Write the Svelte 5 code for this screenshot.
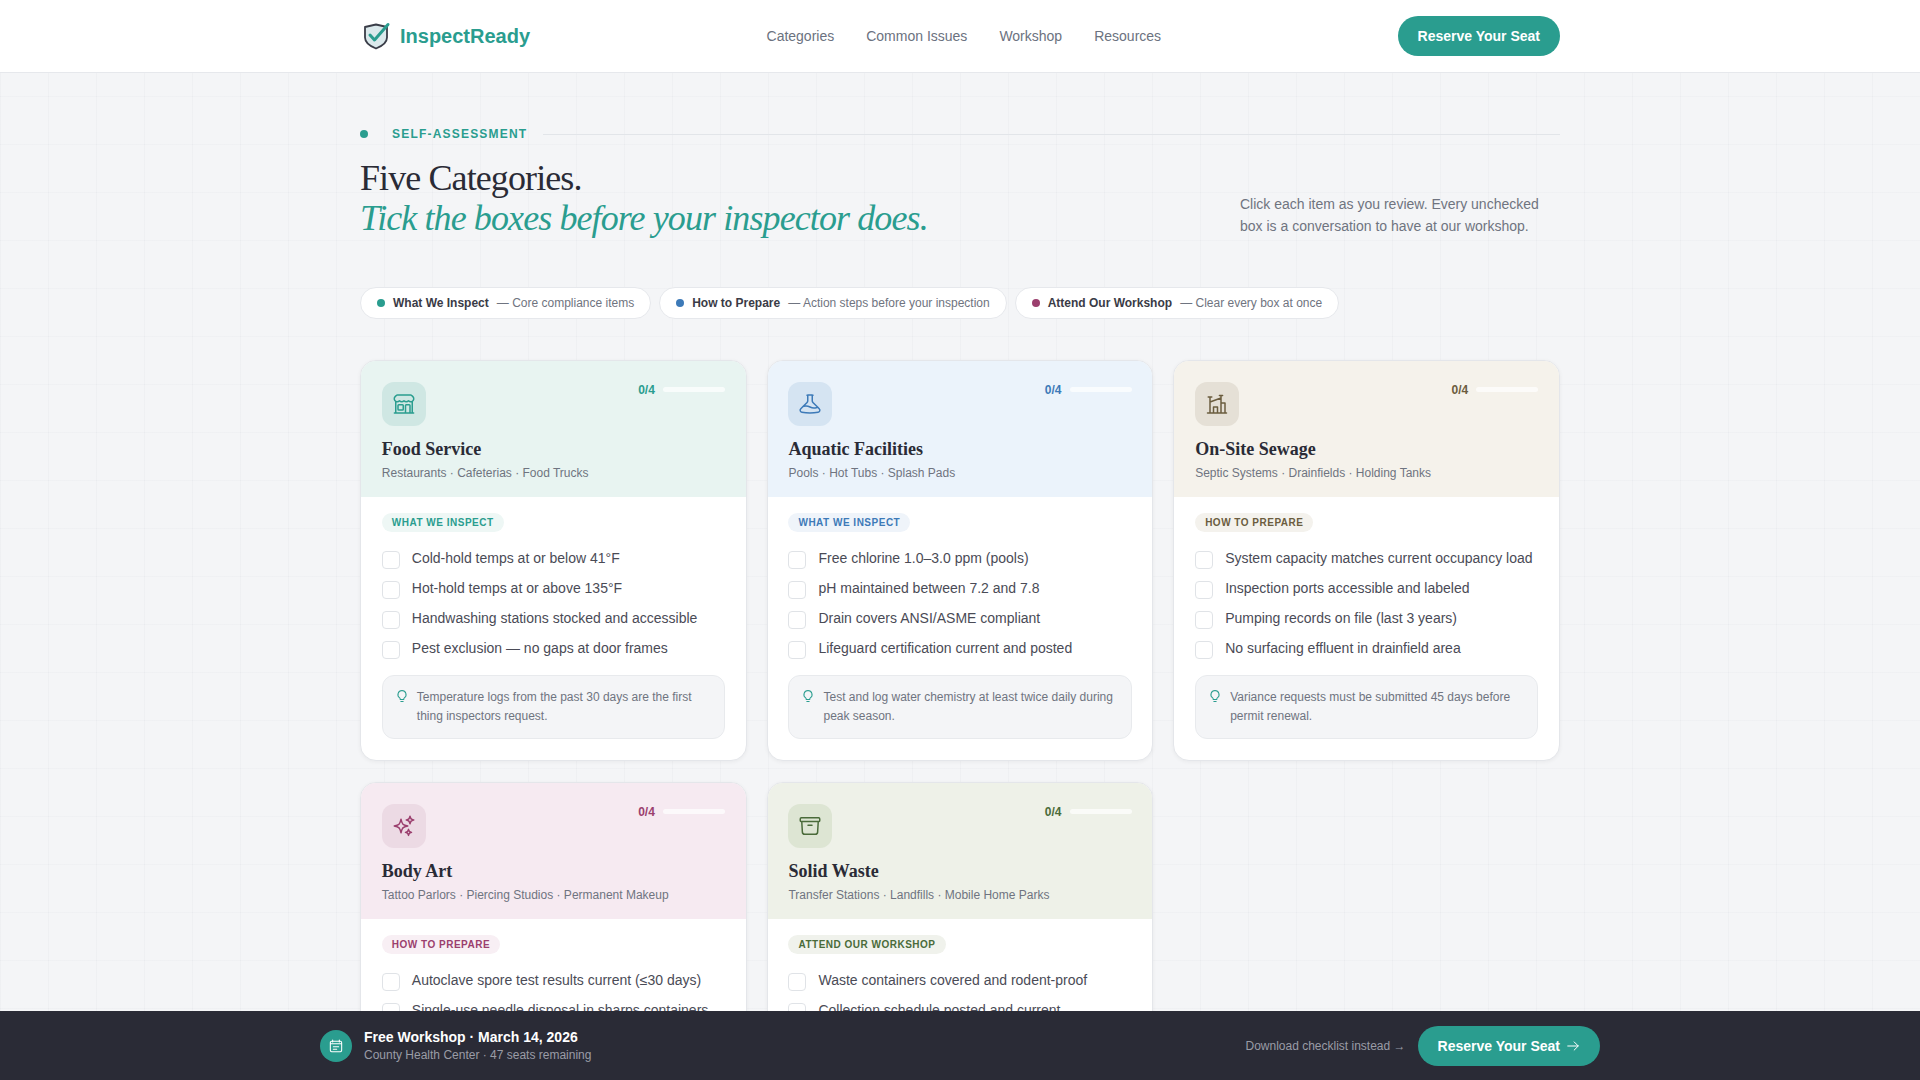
<script>
  const chips = [
    { color: '#2a9d8f', name: 'What We Inspect', note: '— Core compliance items' },
    { color: '#3d7ab8', name: 'How to Prepare', note: '— Action steps before your inspection' },
    { color: '#9b3f6e', name: 'Attend Our Workshop', note: '— Clear every box at once' }
  ]

  const cards = [
    {
      key: 'food', icon: 'store', title: 'Food Service', sub: 'Restaurants · Cafeterias · Food Trucks', tag: 'What We Inspect',
      items: ['Cold-hold temps at or below 41°F', 'Hot-hold temps at or above 135°F', 'Handwashing stations stocked and accessible', 'Pest exclusion — no gaps at door frames'],
      tip: 'Temperature logs from the past 30 days are the first thing inspectors request.'
    },
    {
      key: 'aquatic', icon: 'beaker', title: 'Aquatic Facilities', sub: 'Pools · Hot Tubs · Splash Pads', tag: 'What We Inspect',
      items: ['Free chlorine 1.0–3.0 ppm (pools)', 'pH maintained between 7.2 and 7.8', 'Drain covers ANSI/ASME compliant', 'Lifeguard certification current and posted'],
      tip: 'Test and log water chemistry at least twice daily during peak season.'
    },
    {
      key: 'sewage', icon: 'plant', title: 'On-Site Sewage', sub: 'Septic Systems · Drainfields · Holding Tanks', tag: 'How to Prepare',
      items: ['System capacity matches current occupancy load', 'Inspection ports accessible and labeled', 'Pumping records on file (last 3 years)', 'No surfacing effluent in drainfield area'],
      tip: 'Variance requests must be submitted 45 days before permit renewal.'
    },
    {
      key: 'body', icon: 'sparkles', title: 'Body Art', sub: 'Tattoo Parlors · Piercing Studios · Permanent Makeup', tag: 'How to Prepare',
      items: ['Autoclave spore test results current (≤30 days)', 'Single-use needle disposal in sharps containers', 'Client consent forms retained on file', 'Artist licenses displayed at each station'],
      tip: 'Keep spore test logs in a binder next to the autoclave.'
    },
    {
      key: 'waste', icon: 'archive', title: 'Solid Waste', sub: 'Transfer Stations · Landfills · Mobile Home Parks', tag: 'Attend Our Workshop',
      items: ['Waste containers covered and rodent-proof', 'Collection schedule posted and current', 'Leachate controls inspected and logged', 'Site access restricted after hours'],
      tip: 'Bring your last two inspection reports to the workshop.'
    }
  ]

  const icons = {
    store: 'M13.5 21v-7.5a.75.75 0 0 1 .75-.75h3a.75.75 0 0 1 .75.75V21m-4.5 0H2.36m11.14 0H18m0 0h3.64m-1.39 0V9.35m-16.5 11.65V9.35m0 0a3 3 0 0 0 3.75-.62 3 3 0 0 0 2.25 1.02c.9 0 1.7-.4 2.25-1.02a3 3 0 0 0 2.25 1.02c.9 0 1.7-.4 2.25-1.02a3 3 0 0 0 3.75.62m-16.5 0a3 3 0 0 1-.62-4.72l1.19-1.19A1.5 1.5 0 0 1 5.38 3h13.24c.4 0 .78.16 1.06.44l1.19 1.19a3 3 0 0 1-.62 4.72M6.75 18h3.75a.75.75 0 0 0 .75-.75V13.5a.75.75 0 0 0-.75-.75H6.75a.75.75 0 0 0-.75.75v3.75c0 .41.34.75.75.75Z',
    beaker: 'M9.75 3.1v5.71c0 .6-.24 1.17-.66 1.6L5 14.5m4.75-11.4a24 24 0 0 1 4.5 0m-4.5 0c-.25.03-.5.05-.75.08m5.25-.08v5.71c0 .6.24 1.17.66 1.6L19.8 15.3M14.25 3.1c.25.03.5.05.75.08M19.8 15.3l-1.57.39A9.07 9.07 0 0 1 12 15a9.07 9.07 0 0 0-6.23-.69L5 14.5m14.8.8 1.4 1.4c1.23 1.23.65 3.32-1.07 3.6A48.3 48.3 0 0 1 12 21c-2.77 0-5.49-.24-8.13-.7-1.72-.28-2.3-2.37-1.07-3.6L5 14.5',
    plant: 'M2.5 21h19M5 21V5M3.2 5h3.6M5 10l11-4M16 3.500V21M14.400 3.500h3.200M16 11h4v10M8.500 21v-6h4v6',
    sparkles: 'M9.81 15.9 9 18.75l-.81-2.85a4.5 4.5 0 0 0-3.09-3.09L2.25 12l2.85-.81a4.5 4.5 0 0 0 3.09-3.09L9 5.25l.81 2.85a4.5 4.5 0 0 0 3.09 3.09l2.85.81-2.85.81a4.5 4.5 0 0 0-3.09 3.09ZM18.26 8.72 18 9.75l-.26-1.03a3.38 3.38 0 0 0-2.46-2.46L14.25 6l1.03-.26a3.38 3.38 0 0 0 2.46-2.46L18 2.25l.26 1.03a3.38 3.38 0 0 0 2.46 2.46l1.03.26-1.03.26a3.38 3.38 0 0 0-2.46 2.46ZM16.89 20.18 16.5 21.38l-.39-1.2a2.25 2.25 0 0 0-1.42-1.42l-1.2-.39 1.2-.39a2.25 2.25 0 0 0 1.42-1.42l.39-1.2.39 1.2a2.25 2.25 0 0 0 1.42 1.42l1.2.39-1.2.39a2.25 2.25 0 0 0-1.42 1.42Z',
    archive: 'M20.25 7.5l-.63 10.63A2.25 2.25 0 0 1 17.38 20.25H6.62a2.25 2.25 0 0 1-2.24-2.12L3.75 7.5M10 11.25h4M3.38 7.5h17.25c.62 0 1.12-.5 1.12-1.12v-1.5c0-.63-.5-1.13-1.12-1.13H3.38c-.63 0-1.13.5-1.13 1.13v1.5c0 .62.5 1.12 1.13 1.12Z'
  }
</script>

<nav class="topbar">
  <div class="topbar-inner">
    <a class="logo" href="#top">
      <svg class="logo-mark" viewBox="0 0 32 32" width="32" height="32" fill="none">
        <path d="M5 7l11-2.500L27 7v10.500c0 5.200-4.600 8.500-11 11-6.400-2.500-11-5.800-11-11Z" fill="#dbe9ec" stroke="#3a3d48" stroke-width="1.800" stroke-linejoin="round"/>
        <path d="M10 15l4.500 5L28 4.500" stroke="#2a9d8f" stroke-width="3" stroke-linecap="round" stroke-linejoin="round"/>
      </svg>
      <span>InspectReady</span>
    </a>
    <div class="links">
      <a href="#categories">Categories</a>
      <a href="#issues">Common Issues</a>
      <a href="#workshop">Workshop</a>
      <a href="#resources">Resources</a>
    </div>
    <a class="btn" href="#reserve">Reserve Your Seat</a>
  </div>
</nav>

<main class="page">
  <div class="eyebrow"><i></i><span>SELF-ASSESSMENT</span><b></b></div>

  <header class="head">
    <h1>Five Categories.<br /><em>Tick the boxes before your inspector does.</em></h1>
    <p>Click each item as you review. Every unchecked box is a conversation to have at our workshop.</p>
  </header>

  <div class="chips">
    {#each chips as chip}
      <div class="chip">
        <i style="background:{chip.color}"></i>
        <strong>{chip.name}</strong>
        <span>{chip.note}</span>
      </div>
    {/each}
  </div>

  <section class="grid">
    {#each cards as card}
      <article class="card {card.key}">
        <div class="card-head">
          <div class="card-top">
            <div class="card-icon">
              <svg viewBox="0 0 24 24" width="24" height="24" fill="none" stroke="currentColor" stroke-width="1.5" stroke-linecap="round" stroke-linejoin="round">
                <path d={icons[card.icon]} />
              </svg>
            </div>
            <div class="progress">
              <span>0/4</span>
              <div class="track"></div>
            </div>
          </div>
          <h3>{card.title}</h3>
          <p>{card.sub}</p>
        </div>
        <div class="card-body">
          <span class="tag">{card.tag}</span>
          <ul>
            {#each card.items as item}
              <li><span class="box"></span><span>{item}</span></li>
            {/each}
          </ul>
          <div class="tip">
            <svg viewBox="0 0 24 24" width="14" height="14" fill="none" stroke="#2a9d8f" stroke-width="1.8" stroke-linecap="round" stroke-linejoin="round">
              <path d="M9 18h6M10 21.500h4M12 2.500a7 7 0 0 0-4 12.700c.7.500 1 1.200 1 2.800h6c0-1.600.3-2.300 1-2.800a7 7 0 0 0-4-12.700Z" />
            </svg>
            <span>{card.tip}</span>
          </div>
        </div>
      </article>
    {/each}
  </section>
</main>

<footer class="bar">
  <div class="bar-inner">
    <div class="bar-left">
      <div class="bar-icon">
        <svg viewBox="0 0 24 24" width="16" height="16" fill="none" stroke="#fff" stroke-width="1.6" stroke-linecap="round" stroke-linejoin="round">
          <path d="M7 3v3M17 3v3M3.500 8.500h17M5.500 5h13a2 2 0 0 1 2 2v11.500a2 2 0 0 1-2 2h-13a2 2 0 0 1-2-2V7a2 2 0 0 1 2-2ZM8 13h8M8 17h5" />
        </svg>
      </div>
      <div>
        <div class="bar-title">Free Workshop · March 14, 2026</div>
        <div class="bar-sub">County Health Center · 47 seats remaining</div>
      </div>
    </div>
    <div class="bar-right">
      <a class="download" href="#download">Download checklist instead →</a>
      <a class="btn" href="#reserve">
        Reserve Your Seat
        <svg viewBox="0 0 24 24" width="14" height="14" fill="none" stroke="currentColor" stroke-width="1.700" stroke-linecap="round" stroke-linejoin="round"><path d="M3 12h18M14 5l7 7-7 7" /></svg>
      </a>
    </div>
  </div>
</footer>

<style>
  :global(body) {
    margin: 0;
    background-color: #f4f5f7;
    background-image:
      linear-gradient(rgba(40, 50, 70, 0.018) 1px, transparent 1px),
      linear-gradient(90deg, rgba(40, 50, 70, 0.022) 1px, transparent 1px);
    background-size: 48px 48px;
    font-family: "Liberation Sans", Arial, sans-serif;
    color: #2a2b36;
  }

  a {
    text-decoration: none;
    color: inherit;
  }

  .topbar {
    height: 73px;
    box-sizing: border-box;
    background: #fff;
    border-bottom: 1px solid #e6e8ec;
  }

  .topbar-inner {
    width: 1200px;
    height: 100%;
    margin: 0 auto;
    display: flex;
    align-items: center;
    justify-content: space-between;
  }

  .logo {
    display: flex;
    align-items: center;
    gap: 8px;
    color: #2a9d8f;
    font-size: 20px;
    font-weight: 700;
  }

  .links {
    display: flex;
    gap: 32px;
    font-size: 14px;
    color: #6b7280;
  }

  .btn {
    display: inline-flex;
    align-items: center;
    gap: 6px;
    height: 40px;
    padding: 0 20px;
    box-sizing: border-box;
    background: #2a9d8f;
    color: #fff;
    border-radius: 20px;
    font-size: 14px;
    font-weight: 700;
  }

  .page {
    width: 1200px;
    margin: 0 auto;
    padding: 53px 0 120px;
  }

  .eyebrow {
    display: flex;
    align-items: center;
    height: 16px;
    font-size: 12px;
    font-weight: 700;
    letter-spacing: 0.1em;
    color: #2a9d8f;
  }

  .eyebrow i {
    width: 8px;
    height: 8px;
    border-radius: 50%;
    background: #2a9d8f;
    margin-right: 24px;
  }

  .eyebrow b {
    flex: 1;
    height: 1px;
    margin-left: 16px;
    background: #e2e5e9;
  }

  .head {
    display: flex;
    justify-content: space-between;
    align-items: flex-end;
    margin-top: 16px;
  }

  h1 {
    margin: 0;
    font-family: "Liberation Serif", "Times New Roman", serif;
    font-size: 36px;
    font-weight: 400;
    line-height: 40px;
    letter-spacing: -0.025em;
    color: #2a2b36;
  }

  h1 em {
    color: #2a9d8f;
  }

  .head p {
    width: 320px;
    margin: 0 0 1px;
    font-size: 14px;
    line-height: 22px;
    color: #6f7480;
  }

  .chips {
    display: flex;
    gap: 8px;
    margin-top: 49px;
  }

  .chip {
    display: flex;
    align-items: center;
    height: 32px;
    box-sizing: border-box;
    padding: 0 16px;
    background: #fff;
    border: 1px solid #e6e8ec;
    border-radius: 16px;
    font-size: 12px;
    color: #6f7480;
  }

  .chip i {
    width: 8px;
    height: 8px;
    border-radius: 50%;
    margin-right: 8px;
  }

  .chip strong {
    color: #3a3b46;
    margin-right: 8px;
  }

  .grid {
    display: grid;
    grid-template-columns: repeat(3, 1fr);
    gap: 21px 20px;
    margin-top: 41px;
  }

  .card {
    background: #fff;
    border: 1px solid #e4e6ea;
    border-radius: 16px;
    overflow: hidden;
    box-shadow: 0 1px 4px rgba(0, 0, 0, 0.05);
  }

  .card-head {
    padding: 20.8px 20.8px 16.2px;
    background: var(--head);
  }

  .card-top {
    display: flex;
    justify-content: space-between;
    align-items: flex-start;
  }

  .card-icon {
    width: 44px;
    height: 44px;
    border-radius: 12px;
    display: flex;
    align-items: center;
    justify-content: center;
    background: var(--icon);
    color: var(--accent);
  }

  .progress {
    display: flex;
    align-items: center;
    gap: 8px;
    font-size: 12px;
    font-weight: 700;
    line-height: 16px;
    color: var(--accent);
  }

  .track {
    width: 62px;
    height: 5px;
    border-radius: 3px;
    background: rgba(255, 255, 255, 0.7);
  }

  h3 {
    margin: 11px 0 0;
    font-family: "Liberation Serif", "Times New Roman", serif;
    font-size: 18px;
    font-weight: 700;
    line-height: 24px;
    color: #2a2b36;
  }

  .card-head p {
    margin: 4px 0 0;
    font-size: 12px;
    line-height: 16px;
    color: #6f7480;
  }

  .card-body {
    padding: 16px 20.8px 20.8px;
  }

  .tag {
    display: block;
    width: fit-content;
    padding: 0 10px;
    height: 19px;
    line-height: 19px;
    border-radius: 10px;
    background: var(--tag);
    color: var(--accent);
    font-size: 10px;
    font-weight: 700;
    letter-spacing: 0.05em;
    text-transform: uppercase;
  }

  ul {
    list-style: none;
    margin: 16px 0 0;
    padding: 0;
    display: flex;
    flex-direction: column;
    gap: 9px;
  }

  li {
    display: flex;
    gap: 12px;
    font-size: 14px;
    line-height: 20px;
    color: #4a4b56;
  }

  .box {
    flex: none;
    width: 18px;
    height: 18px;
    box-sizing: border-box;
    margin-top: 3px;
    background: #fff;
    border: 1px solid #e0e3e7;
    border-radius: 4px;
  }

  .tip {
    display: flex;
    gap: 8px;
    margin-top: 16px;
    padding: 12px;
    background: #f4f5f7;
    border: 1px solid #e8eaed;
    border-radius: 12px;
    font-size: 12px;
    line-height: 19px;
    color: #6f7480;
  }

  .tip svg {
    flex: none;
    margin-top: 1px;
  }

  .food { --head: #e8f4f1; --icon: #cfe7e3; --accent: #2a9d8f; --tag: #eef7f5; }
  .aquatic { --head: #ebf3fb; --icon: #d5e4f2; --accent: #3d7ab8; --tag: #eff4fa; }
  .sewage { --head: #f5f2eb; --icon: #e5e0d6; --accent: #6b5d3f; --tag: #f4f2ed; }
  .body { --head: #f6eaf1; --icon: #ecdae4; --accent: #9b3f6e; --tag: #f8eff4; }
  .waste { --head: #eef1e8; --icon: #dde5d3; --accent: #4a6b3a; --tag: #f0f2ec; }

  .bar {
    position: fixed;
    left: 0;
    right: 0;
    bottom: 0;
    height: 69px;
    background: #2a2b36;
  }

  .bar-inner {
    width: 1280px;
    height: 100%;
    margin: 0 auto;
    display: flex;
    align-items: center;
    justify-content: space-between;
  }

  .bar-left {
    display: flex;
    align-items: center;
    gap: 12px;
  }

  .bar-icon {
    width: 32px;
    height: 32px;
    border-radius: 50%;
    background: #2a9d8f;
    display: flex;
    align-items: center;
    justify-content: center;
  }

  .bar-title {
    font-size: 14px;
    font-weight: 700;
    line-height: 18px;
    color: #fff;
  }

  .bar-sub {
    margin-top: 1px;
    font-size: 12px;
    line-height: 16px;
    color: #9a9ca6;
  }

  .bar-right {
    display: flex;
    align-items: center;
    gap: 12px;
  }

  .download {
    font-size: 12px;
    color: #9a9ca6;
  }
</style>
